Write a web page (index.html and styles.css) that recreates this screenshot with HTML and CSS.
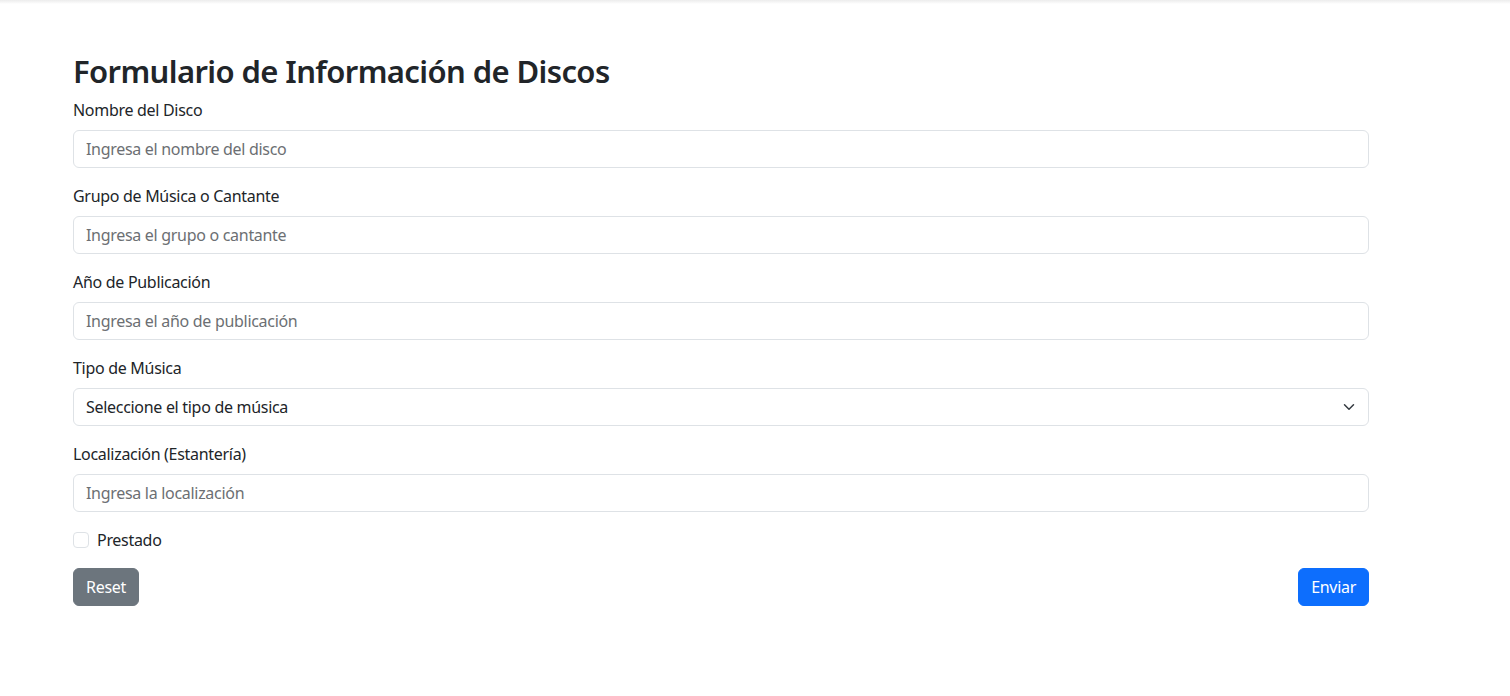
FILE: index.html
```html
<!DOCTYPE html>
<html lang="es">
<head>
<meta charset="utf-8">
<title>Formulario de Información de Discos</title>
<link rel="stylesheet" href="styles.css">
</head>
<body>
<div class="topbar"></div>
<main class="container">
  <h1 class="title">Formulario de Información de Discos</h1>
  <form class="form">
    <div class="group">
      <label class="label" for="nombre">Nombre del Disco</label>
      <input class="control" id="nombre" type="text" placeholder="Ingresa el nombre del disco">
    </div>
    <div class="group">
      <label class="label" for="grupo">Grupo de Música o Cantante</label>
      <input class="control" id="grupo" type="text" placeholder="Ingresa el grupo o cantante">
    </div>
    <div class="group">
      <label class="label" for="anio">Año de Publicación</label>
      <input class="control" id="anio" type="text" placeholder="Ingresa el año de publicación">
    </div>
    <div class="group">
      <label class="label" for="tipo">Tipo de Música</label>
      <div class="select-wrap">
        <select class="control select" id="tipo">
          <option>Seleccione el tipo de música</option>
          <option>Rock</option>
          <option>Pop</option>
          <option>Jazz</option>
          <option>Clásica</option>
        </select>
        <svg class="chevron" width="16" height="12" viewBox="0 0 16 16" aria-hidden="true"><path fill="none" stroke="#343a40" stroke-linecap="round" stroke-linejoin="round" stroke-width="2" d="m2 5 6 6 6-6"/></svg>
      </div>
    </div>
    <div class="group">
      <label class="label" for="loc">Localización (Estantería)</label>
      <input class="control" id="loc" type="text" placeholder="Ingresa la localización">
    </div>
    <div class="check">
      <input class="check-input" id="prestado" type="checkbox">
      <label class="check-label" for="prestado">Prestado</label>
    </div>
    <div class="actions">
      <button class="btn btn-secondary" type="reset">Reset</button>
      <button class="btn btn-primary" type="submit">Enviar</button>
    </div>
  </form>
</main>
</body>
</html>
```
FILE: styles.css
```css
* { box-sizing: border-box; }
html, body { margin: 0; padding: 0; }
body {
  background: #fff;
  color: #212529;
  font-family: "Segoe UI", "Noto Sans", "Open Sans", sans-serif;
  font-size: 16px;
  line-height: 1.5;
  letter-spacing: -0.3px;
}
.topbar {
  height: 4px;
  background: linear-gradient(#ececec, #f7f7f7 60%, #fff);
}
.container {
  width: 1296px;
  margin-left: 73px;
  padding-top: 48px;
}
.title {
  margin: 0 0 8px;
  font-size: 31px;
  font-weight: 600;
  line-height: 38.4px;
  letter-spacing: -0.6px;
}
.group { margin-bottom: 16px; }
.label {
  display: block;
  margin-bottom: 8px;
}
.control {
  display: block;
  width: 100%;
  height: 38px;
  padding: 6px 12px;
  font: inherit;
  letter-spacing: inherit;
  color: #212529;
  background: #fff;
  border: 1px solid #dee2e6;
  border-radius: 6px;
  outline: none;
}
.control::placeholder { color: #6c6f73; opacity: 1; }
.select-wrap { position: relative; }
.select {
  appearance: none;
  -webkit-appearance: none;
  padding-right: 36px;
}
.chevron {
  position: absolute;
  right: 12px;
  top: 13px;
  pointer-events: none;
}
.check {
  display: flex;
  align-items: center;
  min-height: 24px;
  margin-bottom: 16px;
}
.check-input {
  appearance: none;
  -webkit-appearance: none;
  width: 16px;
  height: 16px;
  margin: 0 8px 0 0;
  border: 1px solid #dee2e6;
  border-radius: 4px;
  background: #fff;
}
.actions {
  display: flex;
  justify-content: space-between;
}
.btn {
  height: 38px;
  padding: 6px 12px;
  font: inherit;
  letter-spacing: inherit;
  color: #fff;
  border: 1px solid transparent;
  border-radius: 6px;
  cursor: pointer;
}
.btn-secondary { background: #6c757d; border-color: #6c757d; }
.btn-primary { background: #0d6efd; border-color: #0d6efd; }
```
